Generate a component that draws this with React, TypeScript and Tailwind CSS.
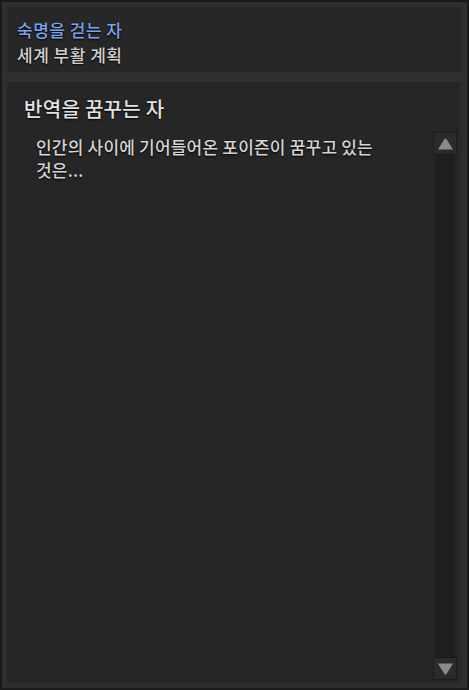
const font = { fontFamily: '"Noto Sans CJK KR", "Noto Sans", sans-serif' }

function ScrollButton({ dir }: { dir: 'up' | 'down' }) {
  return (
    <div className="flex h-[23px] w-[24px] shrink-0 items-center justify-center border border-[#1c1c1c] bg-[#2b2b2b]">
      <svg width="17" height="12" viewBox="0 0 17 12">
        {dir === 'up' ? (
          <path d="M1 11.5 L7.3 1.2 Q8.5 -0.4 9.7 1.2 L16 11.5 Z" fill="#8b8990" />
        ) : (
          <path d="M1 0.5 L7.3 10.8 Q8.5 12.4 9.7 10.8 L16 0.5 Z" fill="#8b8990" />
        )}
      </svg>
    </div>
  )
}

export default function App() {
  return (
    <div
      className="flex h-[690px] w-[469px] flex-col gap-[10px] border-2 border-[#1a1a1a] bg-[#2f2f2f] p-[5px]"
      style={font}
    >
      {/* Header */}
      <div className="h-[65px] shrink-0 bg-[#272727] pl-[10px] pt-[10px] tracking-[0.5px] [text-shadow:0_1px_2px_#000]">
        <p className="text-[17px] leading-[25px] font-medium text-[#78a4ec]">숙명을 걷는 자</p>
        <p className="text-[17px] leading-[25px] font-medium text-[#cfcfcf]">세계 부활 계획</p>
      </div>

      {/* Quest body */}
      <div className="flex flex-1 border-r-[3px] border-[#2b2b2b] bg-[#262626]">
        <div className="flex-1 pl-[17px] pt-[13px] [text-shadow:0_1px_2px_#000]">
          <h2 className="text-[20px] leading-7 font-medium tracking-[0.3px] text-[#e2e2e2]">반역을 꿈꾸는 자</h2>
          <p className="mt-3 ml-3 max-w-[360px] break-keep text-[17px] leading-[23px] font-medium tracking-[0.2px] text-[#d4d4d4]">
            인간의 사이에 기어들어온 포이즌이 꿈꾸고 있는 것은...
          </p>
        </div>
        <div className="mt-[50px] mr-[2px] mb-[3px] flex w-[24px] flex-col">
          <ScrollButton dir="up" />
          <div className="mx-[2px] flex-1 bg-[#1f1f1f]" />
          <ScrollButton dir="down" />
        </div>
      </div>
    </div>
  )
}
